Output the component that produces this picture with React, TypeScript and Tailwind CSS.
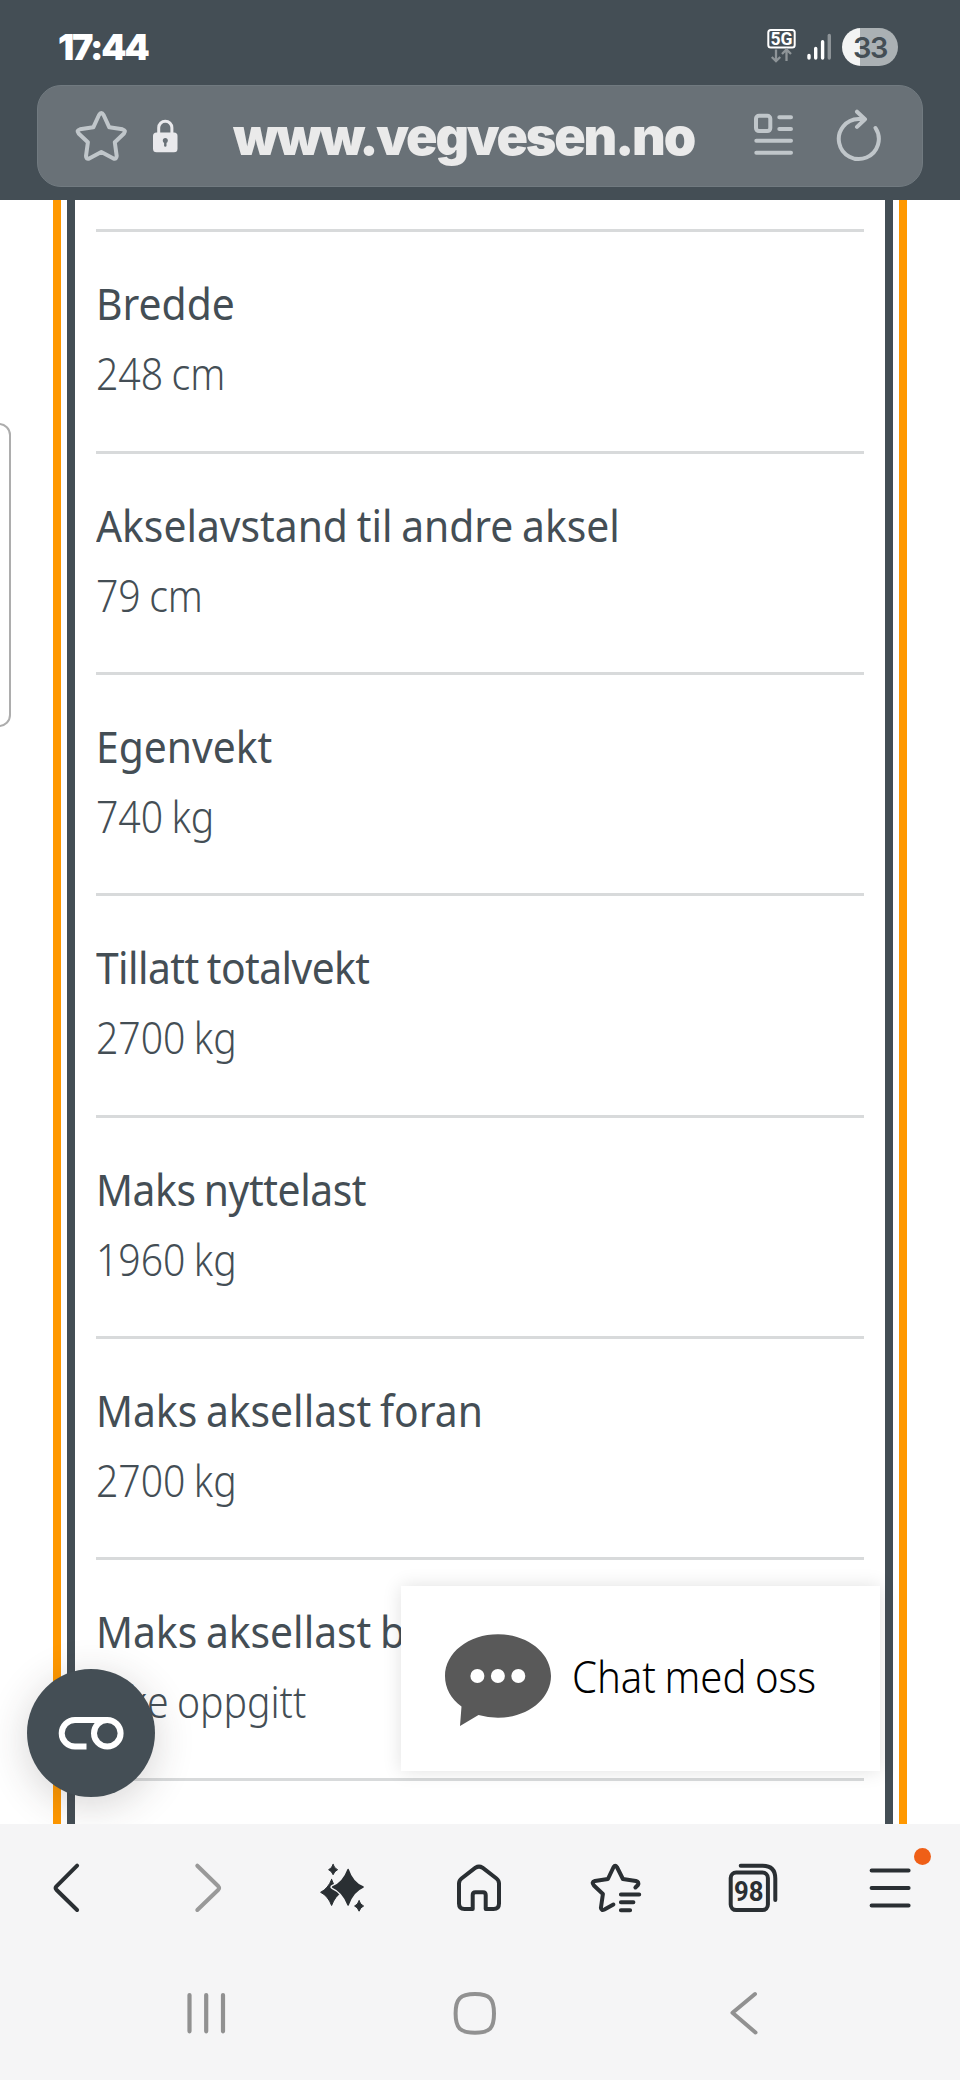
import type { ReactNode } from "react"

const specs = [
  { label: "Bredde", value: "248 cm" },
  { label: "Akselavstand til andre aksel", value: "79 cm" },
  { label: "Egenvekt", value: "740 kg" },
  { label: "Tillatt totalvekt", value: "2700 kg", tracking: "tracking-[-0.6px]" },
  { label: "Maks nyttelast", value: "1960 kg", tracking: "tracking-[-0.45px]" },
  { label: "Maks aksellast foran", value: "2700 kg" },
  { label: "Maks aksellast bak", value: "Ikke oppgitt" },
]

function StatusBar() {
  return (
    <div className="flex h-[85px] items-start justify-between pl-[58px] pr-[62px] text-white">
      <span className="mt-[22px] font-['Inter',sans-serif] text-[36px] font-black leading-[50px] tracking-[-2.2px]">17:44</span>
      <div className="mt-7 flex items-start">
        <svg className="h-[38px] w-[30px]" viewBox="767 28 30 38" fill="none">
          <rect x="768.3" y="30" width="26.4" height="17.6" rx="2.5" stroke="#fff" strokeWidth="2" />
          <text x="781.5" y="45.4" textAnchor="middle" textLength="22" lengthAdjust="spacingAndGlyphs" fill="#fff" className="font-['Roboto',sans-serif] text-[18.5px] font-bold">5G</text>
          <path d="M776 49.5v11.5M771.8 57l4.2 4.2 4.2-4.2M786.5 61V49.5M782 54l4.5-4.5 4.5 4.5" stroke="#8e9498" strokeWidth="2.3" />
        </svg>
        <svg className="ml-[9px] h-[38px] w-[28px]" viewBox="806 28 28 38" fill="none" strokeWidth="3.4" strokeLinecap="round">
          <path d="M809 55.5v2.6M815.7 48.5v9.6M822.6 41.7v16.4" stroke="#fff" />
          <path d="M829.3 35.5v22.6" stroke="#8e9498" />
        </svg>
        <div className="ml-2 flex h-[38px] w-14 items-center justify-center rounded-full bg-[linear-gradient(90deg,#f3f4f4_18px,#abb1b4_18px)] font-['Inter',sans-serif] text-[29px] font-semibold leading-none tracking-[-1.5px] text-[#444e55]">
          <span>33</span>
        </div>
      </div>
    </div>
  )
}

function AddressBar() {
  return (
    <div className="ml-[37px] flex h-[102px] w-[886px] items-center rounded-[24px] border border-[#717a80] bg-[#697177] pl-9">
      <svg className="size-14 shrink-0" viewBox="74 108 56 56" fill="none" stroke="#c0c6ca" strokeWidth="4" strokeLinejoin="round">
        <path d="M99 115Q101.300 111 103.600 115L109.300 127.300L122.500 129.300Q126.500 130.500 124 133.500L114.800 142.300L116.700 156Q116.500 159.500 113.500 158.500L101.300 152L89.200 158.500Q86 159.500 86 156L87.900 142.300L78.600 133.500Q76 130.500 80 129.300L93.300 127.300Z" />
      </svg>
      <svg className="ml-[21px] h-9 w-7 shrink-0" viewBox="151 118 28 36" fill="none">
        <rect x="153" y="132.500" width="24.500" height="19.800" rx="3.500" fill="#e9e9ec" />
        <path d="M158.700 133v-5.200a6.600 6.600 0 0 1 13.200 0V133" stroke="#e9e9ec" strokeWidth="3" />
        <path d="M165.300 142v3.500" stroke="#697177" strokeWidth="2.400" strokeLinecap="round" />
        <circle cx="165.300" cy="140.600" r="2.500" fill="#697177" />
      </svg>
      <span className="ml-[54px] mt-[2px] w-[519px] font-['Inter',sans-serif] text-[52px] font-black leading-none tracking-[-2.25px] text-[#eaeaea]">www.vegvesen.no</span>
      <svg className="h-12 w-11 shrink-0" viewBox="752 112 44 48" fill="none" stroke="#c0c6ca" strokeWidth="4" strokeLinecap="round">
        <rect x="756" y="115.800" width="14.300" height="15.300" rx="3" />
        <path d="M779.300 117.300h11.700M779.300 129h11.700M756.300 140.800h34.700M756.300 152.700h34.700" />
      </svg>
      <svg className="ml-[38px] h-14 w-12 shrink-0" viewBox="834 106 48 56" fill="none" stroke="#c0c6ca" strokeWidth="4" strokeLinecap="round" strokeLinejoin="round">
        <path d="M875.500 126A20 20 0 1 1 858.500 117h6M857 109.700l8 7.500-8 7.700" />
      </svg>
    </div>
  )
}

function SpecRow({ label, value, tracking = "" }: { label: string; value: string; tracking?: string }) {
  return (
    <div className="h-[221.3px] border-b-[3px] border-[#d8dadb] pt-[37px] text-[43.3px] leading-[70px] [word-spacing:-2px]">
      <div className={`w-max origin-left scale-x-[0.942] ${tracking}`}>{label}</div>
      <div className="w-max origin-left scale-x-[0.905] font-light">{value}</div>
    </div>
  )
}

function ChatCard() {
  return (
    <div className="absolute left-[401px] top-[1386px] flex h-[185px] w-[479px] items-center bg-white pl-[43px] text-black shadow-[0_0_18px_rgba(0,0,0,0.12)]">
      <svg className="mt-1 h-24 w-[108px] shrink-0" viewBox="443 1633 108 96">
        <path d="M497 1634.300c29.300 0 53 18.500 53 41.700s-23.700 41.700-53 41.700q-10 0-19.500-2.700L459 1726l1.500-19.500C450 1699 444 1688 444 1676c0-23.200 23.700-41.700 53-41.700Z" fill="#595959" />
        <circle cx="476.400" cy="1676" r="7" fill="#fff" />
        <circle cx="496.900" cy="1676" r="7" fill="#fff" />
        <circle cx="517.300" cy="1676" r="7" fill="#fff" />
      </svg>
      <span className="mb-[3px] ml-5 origin-left scale-x-[0.925] whitespace-nowrap text-[43.3px] font-light leading-[60px] [word-spacing:-2px]">Chat med oss</span>
    </div>
  )
}

function CookieButton() {
  return (
    <div className="absolute left-[27px] top-[1469px] flex size-32 items-center justify-center rounded-full bg-[#444e55] shadow-[0_8px_40px_rgba(50,40,40,0.2)]">
      <svg className="size-[72px]" viewBox="55 1697 72 72" fill="none" stroke="#fff" strokeWidth="6">
        <circle cx="107.300" cy="1733.300" r="13.300" />
        <path d="M107.300 1720H75a13.300 13.300 0 0 0 0 26.600h11.500" />
      </svg>
    </div>
  )
}

function ToolIcon({ viewBox, children, stroke = "#2a2f33" }: { viewBox: string; children: ReactNode; stroke?: string }) {
  return (
    <div className="flex justify-center">
      <svg className="size-16" viewBox={viewBox} fill="none" stroke={stroke} strokeWidth="4" strokeLinecap="round" strokeLinejoin="round">
        {children}
      </svg>
    </div>
  )
}

function Toolbar() {
  return (
    <div className="grid grid-cols-7 pt-8">
      <ToolIcon viewBox="36.600 1856 64 64">
        <path d="M76.700 1865.700L56 1886.300Q54.500 1888 56 1889.700L76.700 1910" />
      </ToolIcon>
      <ToolIcon viewBox="173.700 1856 64 64" stroke="#999">
        <path d="M197 1865.700L218 1886.300Q219.500 1888 218 1889.700L197 1910" />
      </ToolIcon>
      <ToolIcon viewBox="310.900 1856 64 64">
        <g fill="#2a2f33" strokeWidth="1">
          <path d="M331.500 1879.500Q335 1889.500 342 1892Q335 1896 331.500 1905.500Q328 1896 320.500 1892.300Q328 1888.500 331.500 1879.500Z" />
          <path d="M348 1869.500Q352.500 1883 363 1887Q352.500 1891.500 348 1905Q343 1891.500 332.500 1887Q343 1883 348 1869.500Z" stroke="#f5f5f6" strokeWidth="4.500" />
          <path d="M348 1869.500Q352.500 1883 363 1887Q352.500 1891.500 348 1905Q343 1891.500 332.500 1887Q343 1883 348 1869.500Z" strokeWidth="1.500" />
          <path d="M333 1864.500Q334.300 1868.500 337.500 1869.700Q334.300 1871 333 1874.700Q331.700 1871 328.500 1869.700Q331.700 1868.500 333 1864.500Z" />
          <path d="M359 1900.800Q360.300 1904.800 363.500 1906Q360.300 1907.300 359 1911.200Q357.700 1907.300 354.500 1906Q357.700 1904.800 359 1900.800Z" />
        </g>
      </ToolIcon>
      <ToolIcon viewBox="448 1856 64 64">
        <path d="M475.500 1867.700Q479 1865.500 482.500 1867.700L496.500 1878.500Q499 1880.500 499 1883.500V1903.500Q499 1909 493.500 1909H485.700V1895Q485.700 1892.300 483 1892.300H475.500Q472.700 1892.300 472.700 1895V1909H464.500Q459 1909 459 1903.500V1883.500Q459 1880.500 461.500 1878.500Z" />
      </ToolIcon>
      <ToolIcon viewBox="585.100 1856 64 64">
        <path d="M635.500 1887.500L638 1885Q639.500 1882 636 1881L623 1879L617 1867Q615.300 1864.500 613.700 1867L608 1879L595 1881Q591 1882 594 1885.500L603 1894L601 1908Q601.500 1911 604.500 1909.500L613.500 1904.500M621 1894.500h18.300M621 1902.300h12.500M621 1910.200h9.200" />
      </ToolIcon>
      <ToolIcon viewBox="722.300 1856 64 64">
        <rect x="731" y="1872.600" width="37.200" height="37.500" rx="5.500" />
        <path d="M741 1865.700H763Q775.600 1865.700 775.600 1878.500V1900" />
        <text x="749" y="1901" textAnchor="middle" textLength="29.500" lengthAdjust="spacingAndGlyphs" fill="#2a2f33" stroke="none" className="font-['Roboto',sans-serif] text-[28px] font-bold">98</text>
      </ToolIcon>
      <div className="relative flex justify-center">
        <svg className="size-16" viewBox="859.400 1856 64 64" stroke="#2a2f33" strokeWidth="4" strokeLinecap="round">
          <path d="M872 1870.600h37M872 1888h37M872 1905.400h37" />
        </svg>
        <span className="absolute -top-2 right-[29px] size-[16.500px] rounded-full bg-[#ef5f17]" />
      </div>
    </div>
  )
}

function SystemNav() {
  return (
    <div className="ml-[71px] mt-[61px] grid w-[807px] grid-cols-3 justify-items-center">
      <svg className="size-16" viewBox="174 1981 64 64" stroke="#919191" strokeWidth="4.200" strokeLinecap="round">
        <path d="M189.500 1995v36.300M206.200 1995v36.300M223 1995v36.300" />
      </svg>
      <svg className="size-16" viewBox="443 1981 64 64" fill="none" stroke="#919191" strokeWidth="4">
        <path d="M475 1994C490 1994 494 1999 494 2013.500S490 2032.700 475 2032.700S455.600 2028 455.600 2013.500S460 1994 475 1994Z" />
      </svg>
      <svg className="size-16" viewBox="712 1981 64 64" fill="none" stroke="#919191" strokeWidth="4" strokeLinecap="round" strokeLinejoin="round">
        <path d="M755 1994l-22.500 18.800L755.500 2032.500" />
      </svg>
    </div>
  )
}

export default function App() {
  return (
    <div className="h-[2080px] w-[960px] overflow-hidden bg-white font-['Noto_Sans',sans-serif] text-[#444e55]">
      <header className="h-[200px] bg-[#444e55]">
        <StatusBar />
        <AddressBar />
      </header>
      <main className="relative h-[1624px] overflow-hidden">
        <div className="ml-[53px] h-full w-[854px] border-x-8 border-[#ff9800] px-[6px]">
          <div className="h-full border-x-8 border-[#444e55] px-[21px]">
            <div className="h-[32.400px] border-b-[3px] border-[#d8dadb]" />
            {specs.map((spec) => (
              <SpecRow key={spec.label} {...spec} />
            ))}
          </div>
        </div>
        <div className="absolute -left-4 top-[223px] h-[304px] w-[27px] rounded-[12px] border-2 border-[#adadad]" />
        <ChatCard />
        <CookieButton />
      </main>
      <footer className="h-[256px] bg-[#f5f5f6]">
        <Toolbar />
        <SystemNav />
      </footer>
    </div>
  )
}
